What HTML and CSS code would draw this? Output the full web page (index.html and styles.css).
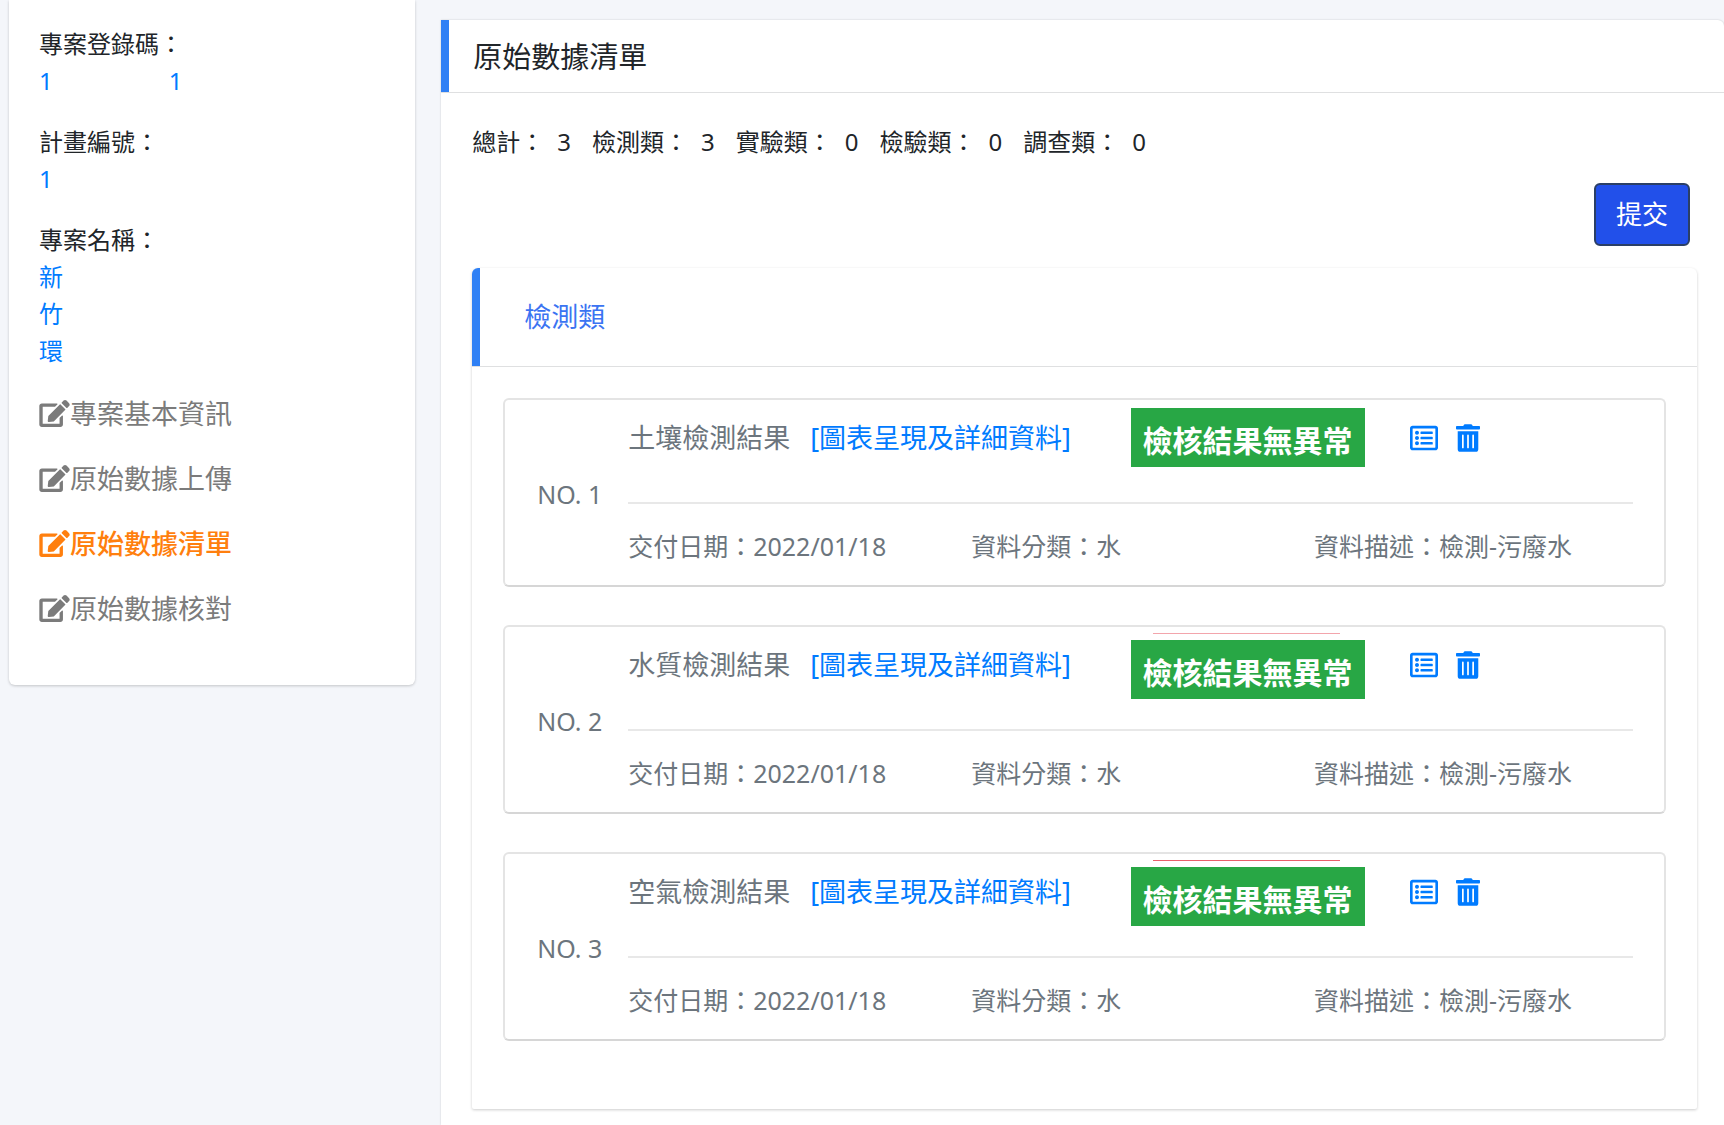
FILE: index.html
```html
<!DOCTYPE html>
<html lang="zh-Hant">
<head>
<meta charset="utf-8">
<meta name="viewport" content="width=device-width, initial-scale=1">
<title>原始數據清單</title>
<link rel="stylesheet" href="styles.css">
</head>
<body>
<svg class="sprite" aria-hidden="true">
  <symbol id="edit" viewBox="0 0 576 512"><path d="M402.6 83.2l90.2 90.2c3.8 3.8 3.8 10 0 13.8L274.4 405.6l-92.8 10.3c-12.4 1.4-22.9-9.1-21.5-21.5l10.3-92.8L388.8 83.2c3.8-3.8 10-3.8 13.8 0zm162-22.9l-48.8-48.8c-15.2-15.2-39.9-15.2-55.2 0l-35.4 35.4c-3.8 3.8-3.8 10 0 13.8l90.2 90.2c3.8 3.8 10 3.8 13.8 0l35.4-35.4c15.2-15.3 15.2-40 0-55.2zM384 346.2V448H64V128h229.8c3.2 0 6.2-1.3 8.5-3.5l40-40c7.6-7.6 2.2-20.5-8.5-20.5H48C21.5 64 0 85.5 0 112v352c0 26.5 21.5 48 48 48h352c26.5 0 48-21.5 48-48V306.2c0-10.7-12.9-16-20.5-8.5l-40 40c-2.2 2.3-3.5 5.3-3.5 8.5z"/></symbol>
  <symbol id="list" viewBox="0 0 512 512"><path d="M464 32H48C21.49 32 0 53.49 0 80v352c0 26.51 21.49 48 48 48h416c26.51 0 48-21.49 48-48V80c0-26.51-21.49-48-48-48zm-6 400H54a6 6 0 0 1-6-6V86a6 6 0 0 1 6-6h404a6 6 0 0 1 6 6v340a6 6 0 0 1-6 6zm-42-92v24c0 6.627-5.373 12-12 12H204c-6.627 0-12-5.373-12-12v-24c0-6.627 5.373-12 12-12h200c6.627 0 12 5.373 12 12zm0-96v24c0 6.627-5.373 12-12 12H204c-6.627 0-12-5.373-12-12v-24c0-6.627 5.373-12 12-12h200c6.627 0 12 5.373 12 12zm0-96v24c0 6.627-5.373 12-12 12H204c-6.627 0-12-5.373-12-12v-24c0-6.627 5.373-12 12-12h200c6.627 0 12 5.373 12 12zm-252 12c0 19.882-16.118 36-36 36s-36-16.118-36-36 16.118-36 36-36 36 16.118 36 36zm0 96c0 19.882-16.118 36-36 36s-36-16.118-36-36 16.118-36 36-36 36 16.118 36 36zm0 96c0 19.882-16.118 36-36 36s-36-16.118-36-36 16.118-36 36-36 36 16.118 36 36z"/></symbol>
  <symbol id="trash" viewBox="0 0 448 512"><path d="M32 464a48 48 0 0 0 48 48h288a48 48 0 0 0 48-48V128H32zm272-256a16 16 0 0 1 32 0v224a16 16 0 0 1-32 0zm-96 0a16 16 0 0 1 32 0v224a16 16 0 0 1-32 0zm-96 0a16 16 0 0 1 32 0v224a16 16 0 0 1-32 0zM432 32H312l-9.4-18.7A24 24 0 0 0 281.1 0H166.8a23.72 23.72 0 0 0-21.4 13.3L136 32H16A16 16 0 0 0 0 48v32a16 16 0 0 0 16 16h416a16 16 0 0 0 16-16V48a16 16 0 0 0-16-16z"/></symbol>
</svg>
<div class="layout">
  <aside class="sidebar">
    <dl class="facts">
      <div><dt>專案登錄碼：</dt><dd class="code"><span>1</span><span>1</span></dd></div>
      <div><dt>計畫編號：</dt><dd>1</dd></div>
      <div><dt>專案名稱：</dt><dd>新<br>竹<br>環</dd></div>
    </dl>
    <nav class="menu">
      <a href="#info"><svg class="icon-edit"><use href="#edit"/></svg>專案基本資訊</a>
      <a href="#upload"><svg class="icon-edit"><use href="#edit"/></svg>原始數據上傳</a>
      <a href="#records" class="active" aria-current="page"><svg class="icon-edit"><use href="#edit"/></svg>原始數據清單</a>
      <a href="#check"><svg class="icon-edit"><use href="#edit"/></svg>原始數據核對</a>
    </nav>
  </aside>

  <main class="panel">
    <h1 class="panel-title">原始數據清單</h1>
    <div class="panel-body">
      <ul class="stats">
        <li><span>總計：</span><span>3</span></li>
        <li><span>檢測類：</span><span>3</span></li>
        <li><span>實驗類：</span><span>0</span></li>
        <li><span>檢驗類：</span><span>0</span></li>
        <li><span>調查類：</span><span>0</span></li>
      </ul>
      <div class="actions"><button class="submit" type="button">提交</button></div>

      <section class="group">
        <h2 class="group-title"><a href="#group">檢測類</a></h2>
        <div class="records">
          <article class="record">
            <div class="number">NO. 1</div>
            <div class="detail">
              <div class="head">
                <div class="name"><span>土壤檢測結果</span><a href="#detail1">[圖表呈現及詳細資料]</a></div>
                <div class="status"><strong class="badge">檢核結果無異常</strong></div>
                <div class="tools">
                  <button type="button" aria-label="清單"><svg class="icon-list"><use href="#list"/></svg></button>
                  <button type="button" aria-label="刪除"><svg class="icon-trash"><use href="#trash"/></svg></button>
                </div>
              </div>
              <div class="meta"><span>交付日期：2022/01/18</span><span>資料分類：水</span><span>資料描述：檢測-污廢水</span></div>
            </div>
          </article>
          <article class="record">
            <div class="number">NO. 2</div>
            <div class="detail">
              <div class="head">
                <div class="name"><span>水質檢測結果</span><a href="#detail2">[圖表呈現及詳細資料]</a></div>
                <div class="status marked light"><strong class="badge">檢核結果無異常</strong></div>
                <div class="tools">
                  <button type="button" aria-label="清單"><svg class="icon-list"><use href="#list"/></svg></button>
                  <button type="button" aria-label="刪除"><svg class="icon-trash"><use href="#trash"/></svg></button>
                </div>
              </div>
              <div class="meta"><span>交付日期：2022/01/18</span><span>資料分類：水</span><span>資料描述：檢測-污廢水</span></div>
            </div>
          </article>
          <article class="record">
            <div class="number">NO. 3</div>
            <div class="detail">
              <div class="head">
                <div class="name"><span>空氣檢測結果</span><a href="#detail3">[圖表呈現及詳細資料]</a></div>
                <div class="status marked"><strong class="badge">檢核結果無異常</strong></div>
                <div class="tools">
                  <button type="button" aria-label="清單"><svg class="icon-list"><use href="#list"/></svg></button>
                  <button type="button" aria-label="刪除"><svg class="icon-trash"><use href="#trash"/></svg></button>
                </div>
              </div>
              <div class="meta"><span>交付日期：2022/01/18</span><span>資料分類：水</span><span>資料描述：檢測-污廢水</span></div>
            </div>
          </article>
        </div>
      </section>
    </div>
  </main>
</div>
</body>
</html>
```

FILE: styles.css
```css
* {
  box-sizing: border-box;
}

body {
  margin: 0;
  background: #f4f6fa;
  color: #212529;
  font-family: "Noto Sans", "Noto Sans CJK TC", sans-serif;
  font-size: 24px;
  line-height: 37px;
}

h1, h2, dl, dd, ul {
  margin: 0;
  padding: 0;
  font-weight: 400;
}

a {
  color: #007bff;
  text-decoration: none;
}

button {
  font: inherit;
  cursor: pointer;
}

svg {
  display: block;
  fill: currentColor;
}

.sprite {
  display: none;
}

.layout {
  display: grid;
  grid-template-columns: 19fr 60fr;
  column-gap: 26px;
  padding-left: 9px;
  min-height: 100vh;
}

/* Sidebar */
.sidebar {
  align-self: start;
  padding: 25px 30px 58px;
  background: #fff;
  border-radius: 0 0 6px 6px;
  box-shadow: 0 1px 3px rgba(0, 0, 0, 0.2);
}

.facts {
  display: grid;
  gap: 24px;
}

.facts dd {
  color: #007bff;
}

.code {
  display: flex;
  gap: 116px;
}

.menu {
  display: grid;
  gap: 28px;
  margin-top: 26px;
}

.menu a {
  display: flex;
  align-items: center;
  color: #7b7b7b;
  font-size: 27px;
}

.menu a.active {
  color: #ff7f0e;
  font-weight: 500;
}

.icon-edit {
  width: 31px;
  height: 27px;
}

/* Main panel */
.panel {
  margin-top: 20px;
  background: #fff;
  border-radius: 0 6px 0 0;
  box-shadow: 0 0 2px rgba(0, 0, 0, 0.2);
}

.panel-title {
  padding: 18px 24px 17px;
  border-left: 8px solid #2f80f5;
  box-shadow: 0 1px 0 #dfe0e1;
  font-size: 29px;
}

.panel-body {
  padding: 31px 27px 16px 31px;
}

.stats {
  display: flex;
  gap: 21px;
  list-style: none;
}

.stats li {
  display: flex;
  gap: 13px;
}

.actions {
  display: flex;
  justify-content: flex-end;
  padding: 23px 7px 22px 0;
}

.submit {
  padding: 11px 20px;
  background: #2250ea;
  border: 2px solid #2b3f66;
  border-radius: 6px;
  color: #fff;
  font-size: 26px;
}

.group {
  border-radius: 6px 6px 2px 2px;
  box-shadow: 0 1px 3px rgba(0, 0, 0, 0.2);
}

.group-title {
  padding: 30px 44px 31px;
  border-left: 8px solid #2f80f5;
  border-top-left-radius: 6px;
  box-shadow: 0 1px 0 #dfe0e1;
  font-size: 27px;
}

.group-title a {
  color: #3b74f2;
}

.records {
  display: grid;
  gap: 38px;
  padding: 32px 31px 68px;
}

.record {
  display: grid;
  grid-template-columns: 91px 1fr;
  align-items: center;
  padding: 0 31px 0 32px;
  border: 2px solid #e4e4e4;
  border-bottom-color: #d6d6d6;
  border-radius: 6px;
  color: #6c757d;
}

.number {
  padding-top: 4px;
  font-size: 25px;
}

.head,
.meta {
  display: grid;
}

.head {
  grid-template-columns: 50% auto 1fr;
  align-items: start;
  height: 104px;
  border-bottom: 2px solid #e8e8e8;
}

.name {
  display: flex;
  gap: 20px;
  padding-top: 19px;
  font-size: 27px;
  white-space: nowrap;
}

.status {
  padding-top: 8px;
}

.marked {
  padding-top: 6px;
}

.marked::before {
  content: "";
  display: block;
  height: 1px;
  margin: 0 25px 6px 22px;
  background: #e8606b;
}

.light::before {
  background: #f3a5ac;
}

.badge {
  display: block;
  padding: 14px 12px 8px;
  background: #28a745;
  color: #fff;
  font-size: 30px;
  font-weight: 700;
}

.tools {
  display: flex;
  align-items: center;
  gap: 18px;
  padding: 24px 0 0 45px;
}

.tools button {
  padding: 0;
  background: none;
  border: 0;
  color: #007bff;
}

.icon-list {
  width: 28px;
  height: 28px;
}

.icon-trash {
  width: 24px;
  height: 28px;
}

.meta {
  grid-template-columns: repeat(3, 1fr);
  margin-right: -24px;
  padding: 24px 0 20px;
  font-size: 25px;
  white-space: nowrap;
}
```
